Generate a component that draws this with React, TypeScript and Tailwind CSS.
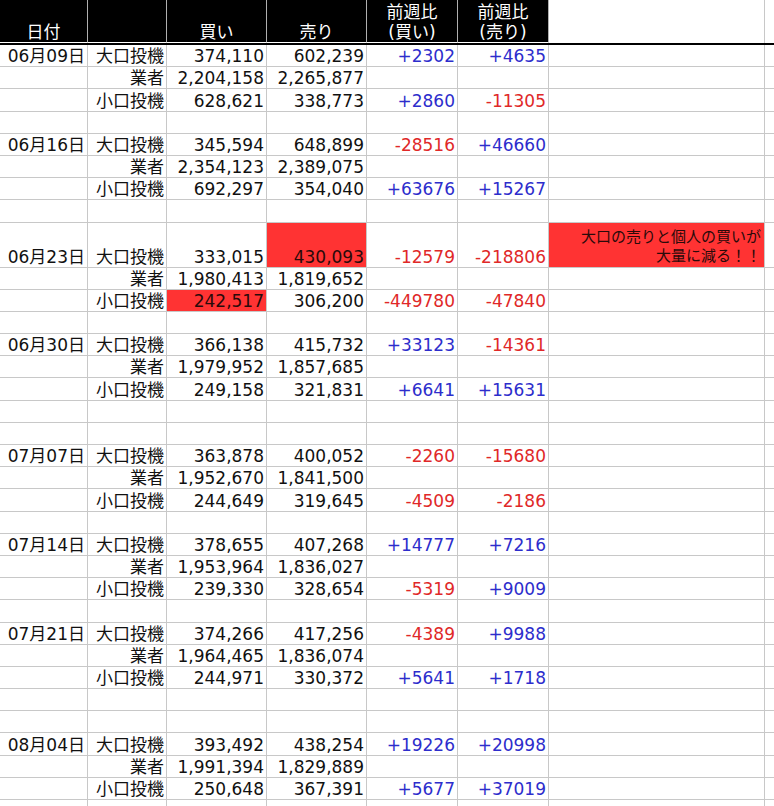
import React from "react";

type Row = {
  date?: string;
  cat?: string;
  buy?: string;
  sell?: string;
  dBuy?: string;
  dSell?: string;
  hiBuy?: boolean;
  hiSell?: boolean;
  tall?: boolean;
  note?: boolean;
};

const blank: Row = {};

const week = (
  date: string,
  a: [string, string, string, string],
  b: [string, string],
  c: [string, string, string, string]
): Row[] => [
  { date, cat: "大口投機", buy: a[0], sell: a[1], dBuy: a[2], dSell: a[3] },
  { cat: "業者", buy: b[0], sell: b[1] },
  { cat: "小口投機", buy: c[0], sell: c[1], dBuy: c[2], dSell: c[3] },
];

const rows: Row[] = [
  ...week("06月09日", ["374,110", "602,239", "+2302", "+4635"], ["2,204,158", "2,265,877"], ["628,621", "338,773", "+2860", "-11305"]),
  blank,
  ...week("06月16日", ["345,594", "648,899", "-28516", "+46660"], ["2,354,123", "2,389,075"], ["692,297", "354,040", "+63676", "+15267"]),
  blank,
  { date: "06月23日", cat: "大口投機", buy: "333,015", sell: "430,093", dBuy: "-12579", dSell: "-218806", hiSell: true, tall: true, note: true },
  { cat: "業者", buy: "1,980,413", sell: "1,819,652" },
  { cat: "小口投機", buy: "242,517", sell: "306,200", dBuy: "-449780", dSell: "-47840", hiBuy: true },
  blank,
  ...week("06月30日", ["366,138", "415,732", "+33123", "-14361"], ["1,979,952", "1,857,685"], ["249,158", "321,831", "+6641", "+15631"]),
  blank,
  blank,
  ...week("07月07日", ["363,878", "400,052", "-2260", "-15680"], ["1,952,670", "1,841,500"], ["244,649", "319,645", "-4509", "-2186"]),
  blank,
  ...week("07月14日", ["378,655", "407,268", "+14777", "+7216"], ["1,953,964", "1,836,027"], ["239,330", "328,654", "-5319", "+9009"]),
  blank,
  ...week("07月21日", ["374,266", "417,256", "-4389", "+9988"], ["1,964,465", "1,836,074"], ["244,971", "330,372", "+5641", "+1718"]),
  blank,
  blank,
  ...week("08月04日", ["393,492", "438,254", "+19226", "+20998"], ["1,991,394", "1,829,889"], ["250,648", "367,391", "+5677", "+37019"]),
  blank,
];

const gridCols = "grid grid-cols-[88px_79px_100px_100px_91px_91px_216px_9px]";

function diffColor(v?: string) {
  if (!v) return "";
  return v.startsWith("-") ? "text-[#e02828]" : "text-[#2d2dcc]";
}

function Cell({
  children,
  className = "",
  fill = false,
}: {
  children?: React.ReactNode;
  className?: string;
  fill?: boolean;
}) {
  return (
    <div
      className={`flex items-end justify-end pr-[2px] border-r border-b border-[#c8c8c8] whitespace-nowrap ${
        fill ? "bg-[#ff3333] text-[#2a0a0a]" : ""
      } ${className}`}
    >
      {children}
    </div>
  );
}

function HeaderCell({ lines }: { lines: string[] }) {
  return (
    <div className="flex flex-col items-center justify-end bg-black text-white border-r border-[#b0b0b0] border-b border-b-white leading-[20px] whitespace-nowrap">
      {lines.map((l) => (
        <span key={l}>{l}</span>
      ))}
    </div>
  );
}

export default function App() {
  return (
    <div
      className="w-[774px] h-[806px] overflow-hidden bg-white text-[17px] text-[#111]"
      style={{ fontFamily: '"DejaVu Sans", "Noto Sans CJK JP", sans-serif' }}
    >
      <div className={`${gridCols} h-[45px] border-b-2 border-black`}>
        <HeaderCell lines={["日付"]} />
        <HeaderCell lines={[""]} />
        <HeaderCell lines={["買い"]} />
        <HeaderCell lines={["売り"]} />
        <HeaderCell lines={["前週比", "(買い)"]} />
        <HeaderCell lines={["前週比", "(売り)"]} />
        <div className="border-r border-[#c8c8c8]" />
        <div />
      </div>
      {rows.map((r, i) => (
        <div
          key={i}
          className={`${gridCols} leading-[20px] ${r.tall ? "h-[45px]" : "h-[22.2px]"}`}
        >
          <Cell>{r.date}</Cell>
          <Cell>{r.cat}</Cell>
          <Cell fill={r.hiBuy}>{r.buy}</Cell>
          <Cell fill={r.hiSell}>{r.sell}</Cell>
          <Cell className={diffColor(r.dBuy)}>{r.dBuy}</Cell>
          <Cell className={diffColor(r.dSell)}>{r.dSell}</Cell>
          {r.note ? (
            <div className="flex flex-col items-end justify-end pr-[3px] pb-[1px] bg-[#ff3333] text-[#2a0a0a] text-[15px] leading-[19px] border-r border-b border-[#c8c8c8] whitespace-nowrap">
              <span>大口の売りと個人の買いが</span>
              <span>大量に減る！！</span>
            </div>
          ) : (
            <div className="border-r border-b border-[#c8c8c8]" />
          )}
          <div className="border-b border-[#c8c8c8]" />
        </div>
      ))}
    </div>
  );
}
